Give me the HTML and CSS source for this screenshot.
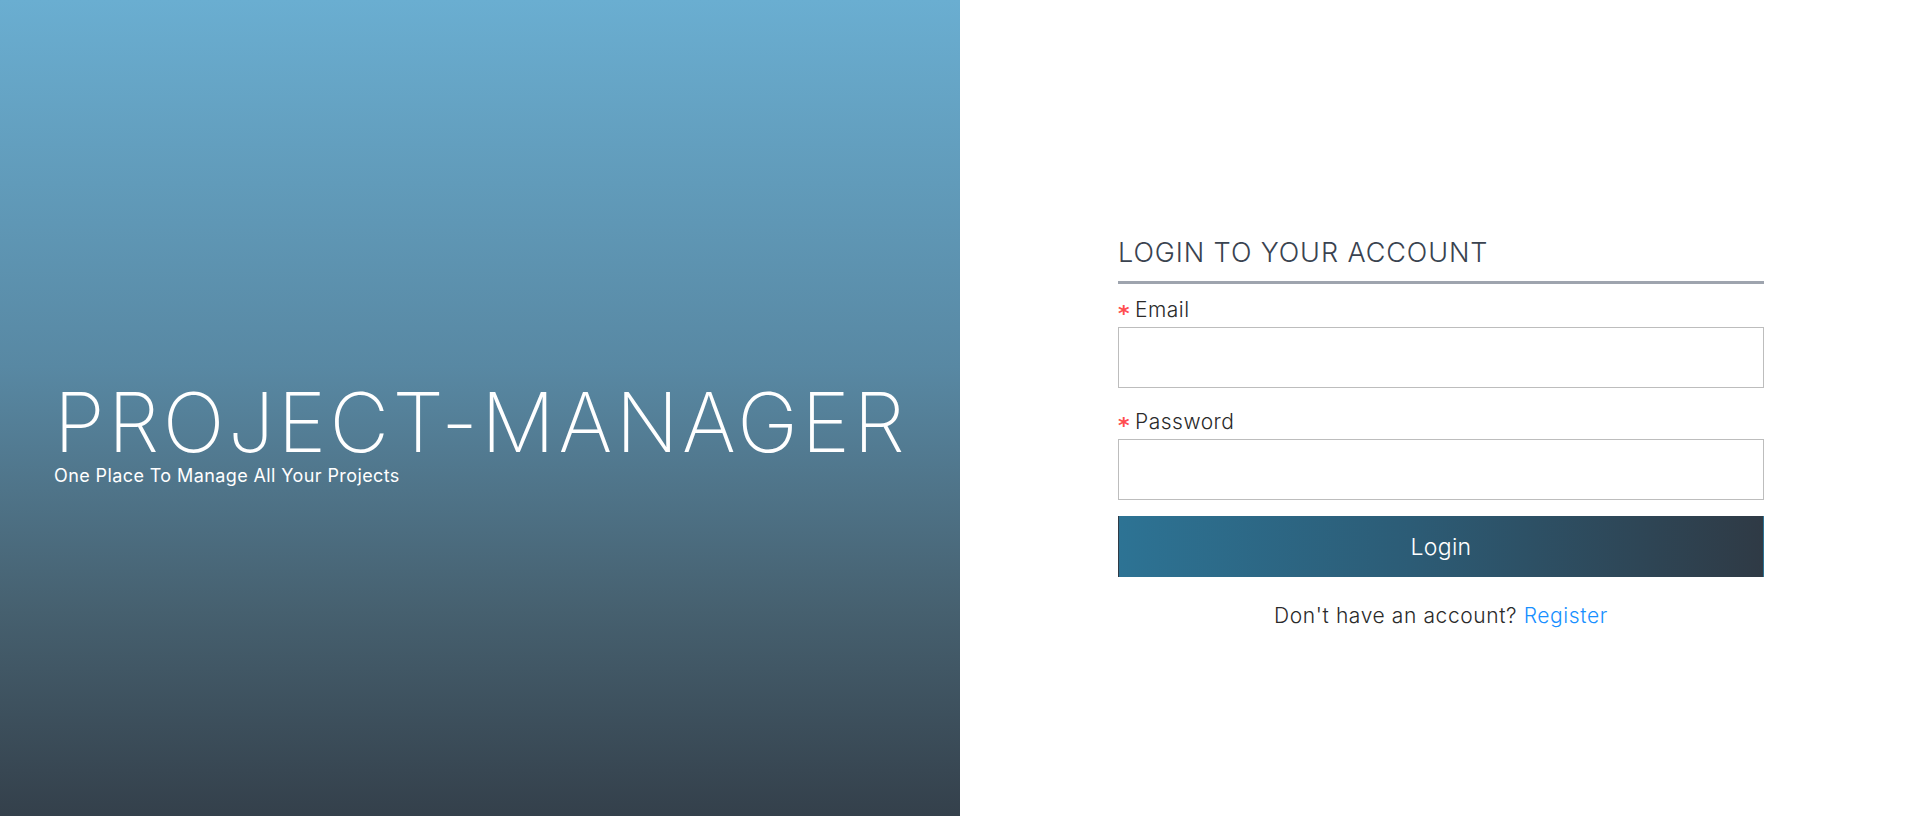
FILE: index.html
```html
<!DOCTYPE html>
<html lang="en">
<head>
<meta charset="utf-8">
<title>Project Manager - Login</title>
<link rel="stylesheet" href="styles.css">
</head>
<body>
<div class="page">
  <section class="hero">
    <h1 class="hero-title">PROJECT-MANAGER</h1>
    <p class="hero-sub">One Place To Manage All Your Projects</p>
  </section>
  <section class="side">
    <form class="login-form">
      <h2 class="form-title">LOGIN TO YOUR ACCOUNT</h2>
      <div class="field">
        <label class="field-label" for="email"><span class="req">*</span>Email</label>
        <input class="field-input" id="email" type="email">
      </div>
      <div class="field">
        <label class="field-label" for="password"><span class="req">*</span>Password</label>
        <input class="field-input" id="password" type="password">
      </div>
      <button class="login-btn" type="button">Login</button>
      <p class="register">Don't have an account? <a class="register-link" href="#">Register</a></p>
    </form>
  </section>
</div>
</body>
</html>
```

FILE: styles.css
```css
html, body {
  margin: 0;
  padding: 0;
  height: 100%;
}
body {
  font-family: Inter, "Open Sans", "DejaVu Sans", sans-serif;
  background: #ffffff;
}
.page {
  display: flex;
  height: 816px;
}
.hero {
  flex: 0 0 960px;
  display: flex;
  flex-direction: column;
  justify-content: flex-start;
  padding: 382px 0 0 54px;
  box-sizing: border-box;
  background: linear-gradient(to bottom, #6aaed1 0%, #5888a3 45%, #46606f 75%, #34404b 100%);
  color: #ffffff;
}
.hero-title {
  margin: 0;
  font-size: 82px;
  line-height: 82px;
  font-weight: 250;
  letter-spacing: 3.5px;
  white-space: nowrap;
}
.hero-sub {
  margin: 2px 0 0 0;
  font-size: 18px;
  line-height: 20px;
  font-weight: 400;
  letter-spacing: 0.4px;
}
.side {
  flex: 1;
  display: flex;
  justify-content: center;
  padding-top: 235px;
  box-sizing: border-box;
}
.login-form {
  width: 646px;
  display: flex;
  flex-direction: column;
  margin-left: 3px;
}
.form-title {
  margin: 0;
  font-size: 27px;
  line-height: 36px;
  font-weight: 300;
  color: #3a4350;
  letter-spacing: 0.9px;
  padding-bottom: 10px;
  border-bottom: 3px solid #9ea4ae;
}
.field {
  display: flex;
  flex-direction: column;
  margin-top: 14px;
}
.field + .field {
  margin-top: 22px;
}
.field-label {
  display: block;
  height: 24px;
  font-size: 21px;
  line-height: 24px;
  color: #2a2a2a;
  font-weight: 350;
  letter-spacing: 0.5px;
  margin-bottom: 5px;
}
.req {
  color: #ff4d4f;
  font-size: 22px;
  line-height: 0;
  font-weight: 700;
  margin-right: 5px;
  vertical-align: -4px;
  font-family: "DejaVu Sans", sans-serif;
}
.field-input {
  height: 61px;
  box-sizing: border-box;
  border: 1px solid #bdbdbd;
  border-radius: 0;
  padding: 0 12px;
  font-size: 18px;
  outline: none;
  background: #ffffff;
}
.login-btn {
  margin-top: 16px;
  height: 61px;
  border: 1px solid transparent;
  border-radius: 0;
  background: linear-gradient(to right, #2d7394 0%, #2c5c76 45%, #2f3a45 100%);
  color: #ffffff;
  font-family: inherit;
  font-size: 23px;
  font-weight: 350;
  letter-spacing: 0.3px;
  cursor: pointer;
}
.register {
  margin: 27px 0 0 0;
  text-align: center;
  font-size: 21px;
  line-height: 24px;
  font-weight: 350;
  letter-spacing: 0.6px;
  color: #2a2a2a;
}
.register-link {
  color: #1890ff;
  text-decoration: none;
}
```
